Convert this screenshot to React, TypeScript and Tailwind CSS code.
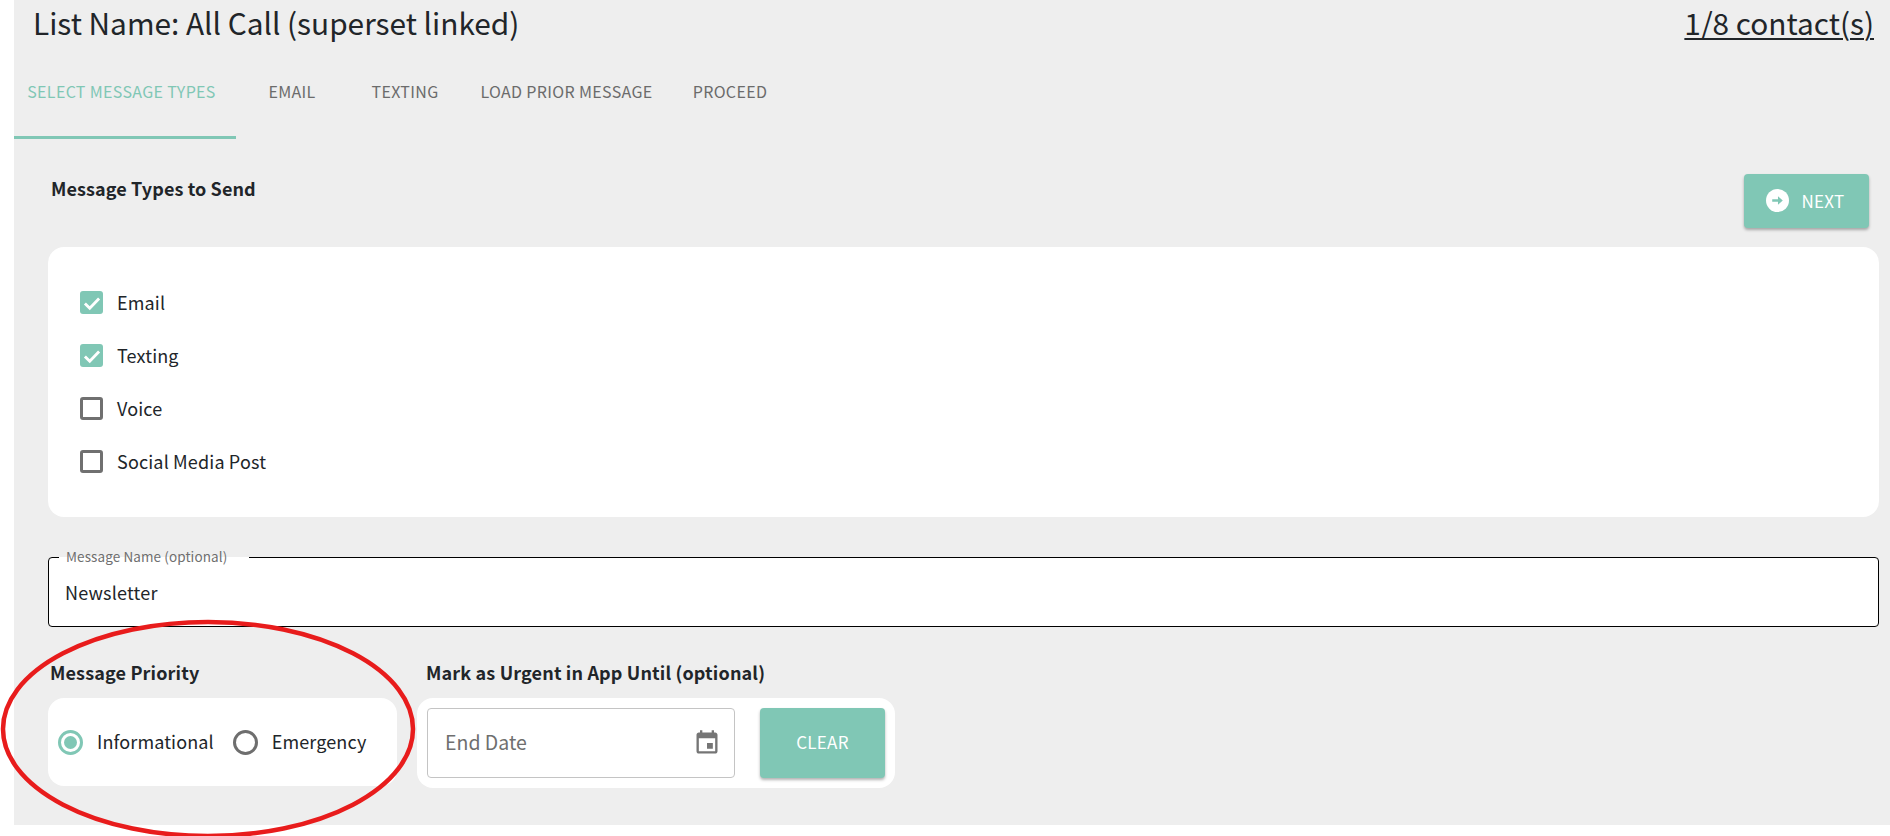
import React from "react";

const font = { fontFamily: '"Noto Sans CJK SC", "Noto Sans", sans-serif' };

function Check({ label, checked }: { label: string; checked?: boolean }) {
  return (
    <div className="flex h-[53px] items-center">
      {checked ? (
        <span className="flex h-[23px] w-[23px] items-center justify-center rounded-[3px] bg-[#80c7b5]">
          <svg width="20" height="20" viewBox="0 0 24 24" fill="none" stroke="#fff" strokeWidth="3.4">
            <path d="M3.5 12.5l5.8 5.8L20.5 6.5" />
          </svg>
        </span>
      ) : (
        <span className="h-[23px] w-[23px] rounded-[3px] border-[3px] border-[#707070] bg-white" />
      )}
      <span className="ml-[14px] pb-[1px] text-[18px] leading-[24px] tracking-[0.15px] text-[#212529]">{label}</span>
    </div>
  );
}

function Radio({ label, checked }: { label: string; checked?: boolean }) {
  return (
    <div className="flex items-center">
      <span
        className={`flex h-[25px] w-[25px] items-center justify-center rounded-full border-[3px] ${
          checked ? "border-[#80c7b5]" : "border-[#6e6e6e]"
        }`}
      >
        {checked && <span className="h-[13px] w-[13px] rounded-full bg-[#80c7b5]" />}
      </span>
      <span className="ml-[14px] pb-[2px] text-[18px] leading-[24px] tracking-[0.12px] text-[#212529]">{label}</span>
    </div>
  );
}

const tabs = [
  { t: "EMAIL", w: "w-[112px]" },
  { t: "TEXTING", w: "w-[114px]" },
  { t: "LOAD PRIOR MESSAGE", w: "w-[209px]" },
  { t: "PROCEED", w: "w-[118px]" },
];

export default function App() {
  return (
    <div className="relative h-[836px] w-[1890px] overflow-hidden bg-white pb-[11px] pl-[14px]" style={font}>
      <div className="h-[825px] bg-[#eeeeee]">
        <div className="flex h-[48px] items-center justify-between pb-[5px] pl-[19px] pr-[16px] text-[29.8px] leading-[38px] text-[#212529]">
          <span>List Name: All Call (superset linked)</span>
          <span className="underline decoration-[2px] underline-offset-[3px]">1/8 contact(s)</span>
        </div>

        <div className="flex h-[91px] text-[16px] leading-[20px] tracking-[0.33px] text-[#6b6b6b]">
          <div className="flex h-[91px] w-[222px] items-start justify-center border-b-[3px] border-[#80c7b5] pr-[7px] pt-[33px] text-[#80c7b5]">
            SELECT MESSAGE TYPES
          </div>
          {tabs.map((x) => (
            <div key={x.t} className={`flex justify-center pt-[33px] ${x.w}`}>
              {x.t}
            </div>
          ))}
        </div>

        <div className="flex h-[108px] items-start justify-between pl-[37px] pr-[21px] pt-[35px]">
          <span className="mt-[2px] text-[18px] font-bold leading-[24px] tracking-[0.1px] text-[#212529]">Message Types to Send</span>
          <button className="flex h-[54px] w-[125px] items-center justify-center gap-[12px] rounded-[4px] bg-[#80c7b5] pb-[1px] pr-[2px] text-[17px] tracking-[0.3px] text-white shadow-[0_2px_3px_rgba(0,0,0,0.3)]">
            <svg width="23" height="23" viewBox="0 0 24 24">
              <circle cx="12" cy="12" r="12" fill="#fff" />
              <path d="M6.5 10.6h6V7.5L17.5 12l-5 4.5v-3.1h-6z" fill="#80c7b5" />
            </svg>
            NEXT
          </button>
        </div>

        <div className="ml-[34px] mr-[11px] flex h-[270px] flex-col justify-center rounded-[16px] bg-white pl-[32px]">
          <Check label="Email" checked />
          <Check label="Texting" checked />
          <Check label="Voice" />
          <Check label="Social Media Post" />
        </div>

        <div className="relative ml-[34px] mr-[11px] mt-[40px] flex h-[70px] items-center rounded-[4px] border border-black bg-white pl-[16px] text-[18px] leading-[24px] text-[#212529]">
          <span className="absolute -top-[1px] left-[10px] h-[1px] w-[190px] bg-white" />
          <span className="absolute -top-[11px] left-[17px] text-[13.5px] leading-[18px] tracking-[0.1px] text-[#6f6f6f]">
            Message Name (optional)
          </span>
          <span className="tracking-[0.2px]">Newsletter</span>
        </div>

        <div className="ml-[34px] mt-[33px] flex items-start gap-[20px]">
          <div className="flex w-[349px] flex-col">
            <span className="-mt-[1px] mb-[1px] ml-[2px] text-[18px] font-bold leading-[26px] tracking-[0.15px] text-[#212529]">Message Priority</span>
            <div className="mt-[12px] flex h-[88px] items-center gap-[19px] rounded-[16px] bg-white pl-[10px]">
              <Radio label="Informational" checked />
              <Radio label="Emergency" />
            </div>
          </div>
          <div className="flex w-[478px] flex-col">
            <span className="-mt-[1px] mb-[1px] ml-[9px] text-[18px] font-bold leading-[26px] tracking-[0.15px] text-[#212529]">Mark as Urgent in App Until (optional)</span>
            <div className="mt-[12px] flex h-[90px] items-center gap-[25px] rounded-[16px] bg-white pl-[10px]">
              <div className="flex h-[70px] w-[308px] items-center justify-between rounded-[4px] border border-[#c4c4c4] pl-[17px] pr-[13px] text-[#6f6f6f]">
                <span className="pb-[2px] text-[19.5px]">End Date</span>
                <svg width="28" height="28" viewBox="0 0 24 24" fill="#757575">
                  <path d="M17 12h-5v5h5v-5zM16 1v2H8V1H6v2H5c-1.11 0-1.99.9-1.99 2L3 19c0 1.1.89 2 2 2h14c1.1 0 2-.9 2-2V5c0-1.1-.9-2-2-2h-1V1h-2zm3 18H5V8h14v11z" />
                </svg>
              </div>
              <button className="h-[70px] w-[125px] rounded-[4px] bg-[#80c7b5] pb-[2px] text-[17px] tracking-[0.3px] text-white shadow-[0_2px_3px_rgba(0,0,0,0.3)]">
                CLEAR
              </button>
            </div>
          </div>
        </div>
      </div>

      <svg className="pointer-events-none absolute left-0 top-[615px]" width="420" height="221" viewBox="0 0 420 221" fill="none">
        <ellipse cx="208" cy="114" rx="205" ry="107" stroke="#e81c1c" strokeWidth="4.5" />
      </svg>
    </div>
  );
}
